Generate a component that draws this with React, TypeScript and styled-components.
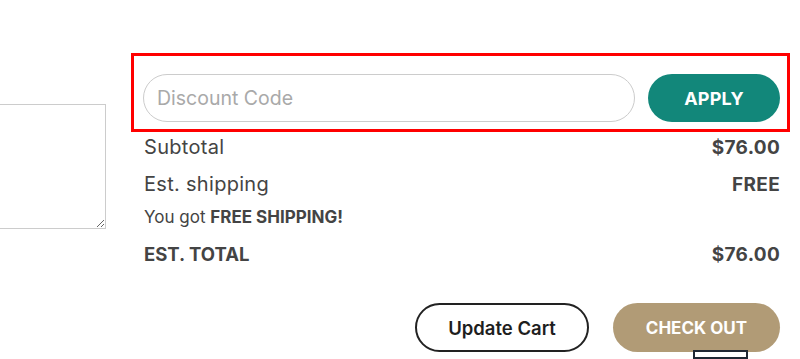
import * as React from 'react';
import styled, { createGlobalStyle } from 'styled-components';

const GlobalStyle = createGlobalStyle`
  html, body {
    margin: 0;
    padding: 0;
    background: #ffffff;
  }
  body {
    font-family: Inter, "Noto Sans", sans-serif;
    color: #444444;
    overflow: hidden;
  }
`;

const Page = styled.div`
  width: 800px;
  height: 359px;
  display: flex;
  overflow: hidden;
`;

const NotesColumn = styled.div`
  width: 106px;
  flex-shrink: 0;
  padding-top: 104px;
  overflow: hidden;
`;

const Notes = styled.textarea`
  display: block;
  box-sizing: border-box;
  width: 130px;
  height: 125px;
  margin-left: -24px;
  border: 1px solid #cccccc;
  resize: both;
`;

const CartColumn = styled.div`
  margin-left: 25px;
  width: 659px;
  padding-top: 53px;
  display: flex;
  flex-direction: column;
`;

const DiscountForm = styled.form`
  display: flex;
  gap: 13px;
  border: 3px solid #ff0000;
  padding: 18px 7px 7px 9px;
  margin: 0;
`;

const CodeInput = styled.input`
  flex: 1;
  box-sizing: border-box;
  height: 48px;
  border: 1px solid #cccccc;
  border-radius: 24px;
  padding: 0 13px;
  font-family: Inter, "Noto Sans", sans-serif;
  font-size: 19.5px;
  color: #444444;
  outline: none;
  &::placeholder {
    color: #a9a9a9;
  }
`;

const ApplyButton = styled.button`
  width: 132px;
  height: 48px;
  border: none;
  border-radius: 24px;
  background: #12877a;
  color: #ffffff;
  font-family: Inter, "Noto Sans", sans-serif;
  font-weight: 700;
  font-size: 18px;
  letter-spacing: 0.2px;
  cursor: pointer;
`;

const Summary = styled.div`
  padding: 1px 10px 0 13px;
  display: flex;
  flex-direction: column;
`;

const Row = styled.div<{ $mt?: number; $h?: number }>`
  display: flex;
  justify-content: space-between;
  align-items: center;
  height: ${(p) => p.$h ?? 28}px;
  margin-top: ${(p) => p.$mt ?? 0}px;
`;

const Label = styled.span<{ $bold?: boolean }>`
  font-size: ${(p) => (p.$bold ? 18.5 : 20)}px;
  font-weight: ${(p) => (p.$bold ? 700 : 400)};
  letter-spacing: ${(p) => (p.$bold ? 0 : 0.3)}px;
  color: #444444;
`;

const Value = styled.span`
  font-size: 19px;
  font-weight: 700;
  letter-spacing: 0.3px;
  color: #444444;
`;

const Note = styled.span`
  font-size: 17px;
  color: #444444;
  b {
    font-weight: 700;
  }
`;

const Actions = styled.div`
  display: flex;
  justify-content: flex-end;
  gap: 24px;
  margin-top: 35px;
  padding-right: 10px;
`;

const PillButton = styled.button<{ $variant: 'outline' | 'solid' }>`
  box-sizing: border-box;
  height: 49px;
  padding: 0;
  border-radius: 25px;
  font-family: Inter, "Noto Sans", sans-serif;
  font-size: ${(p) => (p.$variant === 'solid' ? 17 : 18.5)}px;
  font-weight: ${(p) => (p.$variant === 'solid' ? 700 : 600)};
  cursor: pointer;
  width: ${(p) => (p.$variant === 'solid' ? 167 : 174)}px;
  border: ${(p) => (p.$variant === 'solid' ? 'none' : '2px solid #222222')};
  background: ${(p) => (p.$variant === 'solid' ? '#b19b76' : '#ffffff')};
  color: ${(p) => (p.$variant === 'solid' ? '#ffffff' : '#1e1e1e')};
`;

const PaymentSlot = styled.div`
  align-self: flex-end;
  box-sizing: border-box;
  width: 55px;
  height: 20px;
  margin: -2px 42px 0 0;
  border: 2px solid #1f2733;
  background: #ffffff;
`;

const App: React.FC = () => (
  <>
    <GlobalStyle />
    <Page>
      <NotesColumn>
        <Notes aria-label="Order notes" />
      </NotesColumn>
      <CartColumn>
        <DiscountForm onSubmit={(e) => e.preventDefault()}>
          <CodeInput type="text" placeholder="Discount Code" />
          <ApplyButton type="submit">APPLY</ApplyButton>
        </DiscountForm>
        <Summary>
          <Row>
            <Label>Subtotal</Label>
            <Value>$76.00</Value>
          </Row>
          <Row $mt={9}>
            <Label>Est. shipping</Label>
            <Value>FREE</Value>
          </Row>
          <Row $mt={7} $h={24}>
            <Note>
              You got <b>FREE SHIPPING!</b>
            </Note>
          </Row>
          <Row $mt={11}>
            <Label $bold>EST. TOTAL</Label>
            <Value>$76.00</Value>
          </Row>
        </Summary>
        <Actions>
          <PillButton $variant="outline">Update Cart</PillButton>
          <PillButton $variant="solid">CHECK OUT</PillButton>
        </Actions>
        <PaymentSlot />
      </CartColumn>
    </Page>
  </>
);

export default App;
